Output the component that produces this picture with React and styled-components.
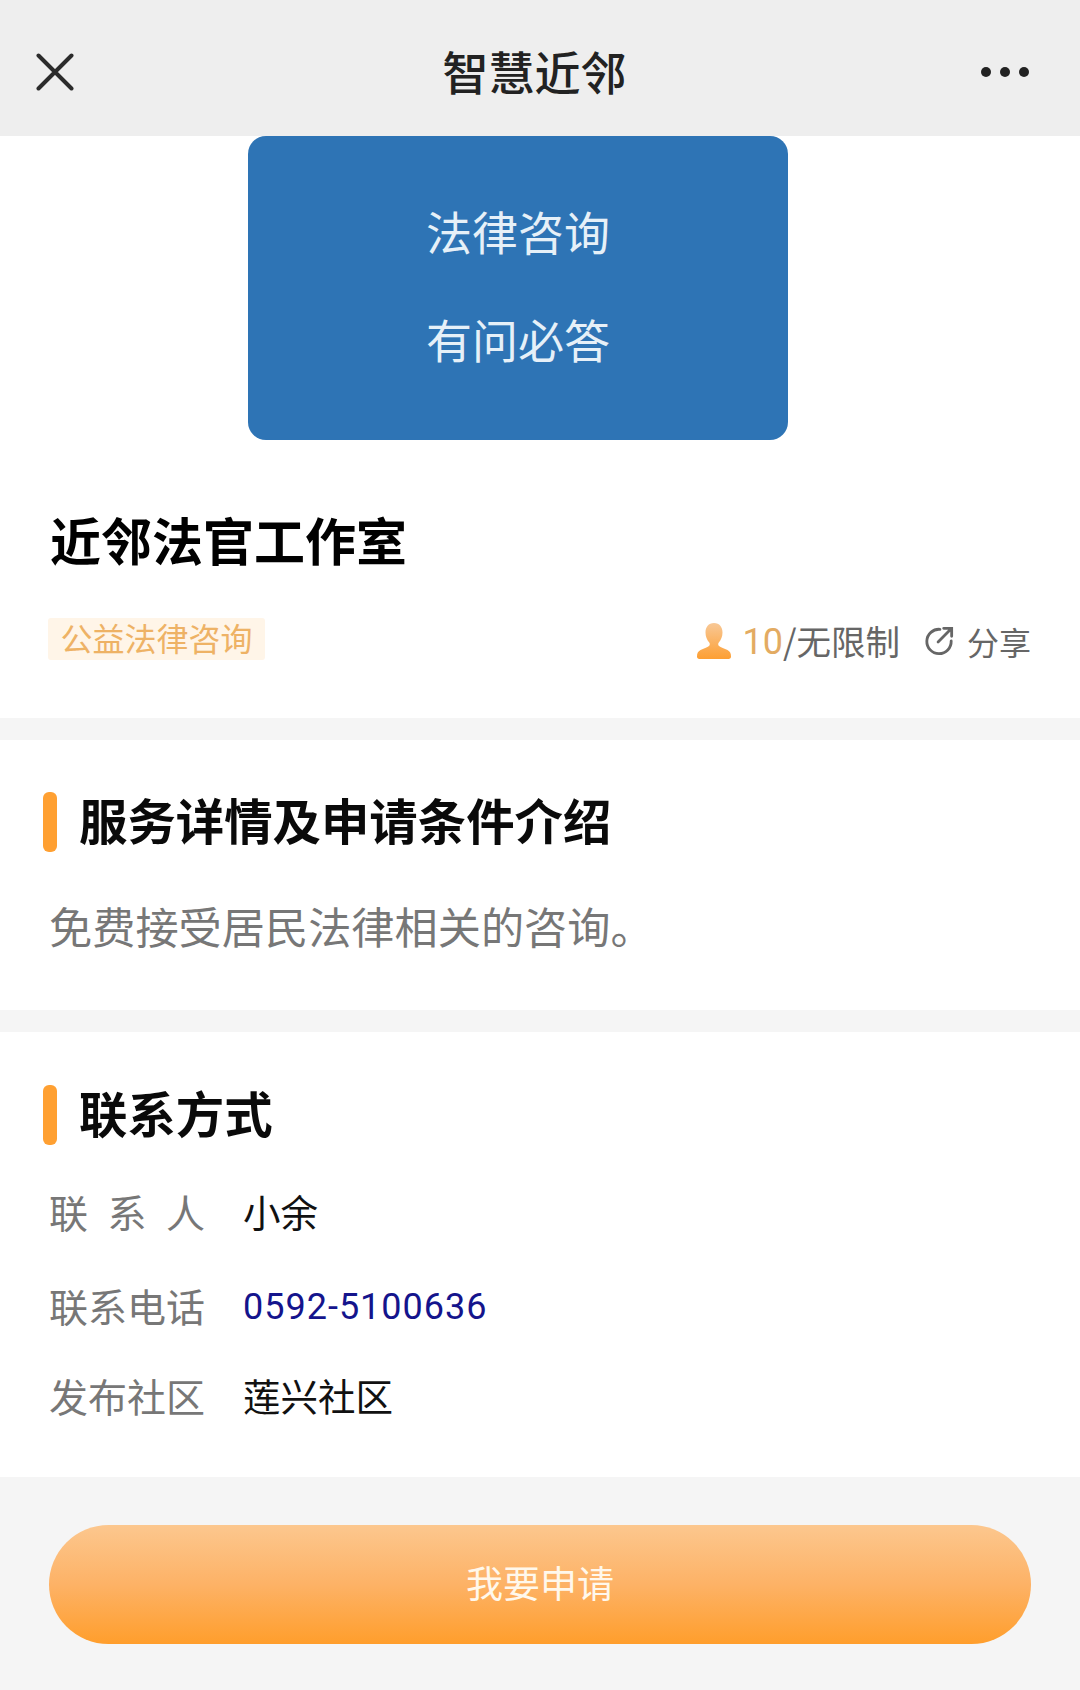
import React from "react";
import styled, { createGlobalStyle } from "styled-components";

const GlobalStyle = createGlobalStyle`
  html, body {
    margin: 0;
    padding: 0;
    background: #f5f5f5;
  }
  body {
    font-family: "Noto Sans CJK SC", "Noto Sans", sans-serif;
  }
`;

const Page = styled.div`
  width: 1080px;
  height: 1690px;
  overflow: hidden;
  display: flex;
  flex-direction: column;
  background: #f5f5f5;
`;

const NavBar = styled.header`
  height: 136px;
  flex: none;
  box-sizing: border-box;
  display: grid;
  grid-template-columns: 1fr auto 1fr;
  align-items: center;
  padding: 8px 51px 0 36px;
  background: #eeeeee;
`;

const NavTitle = styled.h1`
  margin: 0 0 4px 4px;
  font-size: 46px;
  line-height: 60px;
  font-weight: 500;
  color: #222;
  text-align: center;
`;

const NavIcon = styled.svg`
  display: block;
  justify-self: ${({ $end }) => ($end ? "end" : "start")};
`;

const Panel = styled.section`
  background: #fff;
  flex: none;
  height: ${({ $height }) => $height}px;
  margin-bottom: ${({ $gap }) => $gap || 0}px;
  box-sizing: border-box;
  padding-top: ${({ $top }) => $top || 0}px;
`;

const Banner = styled.div`
  width: 540px;
  height: 304px;
  margin-left: 248px;
  box-sizing: border-box;
  padding-top: 40px;
  border-radius: 18px;
  background: #2e74b5;
  color: #e6f0f8;
  text-align: center;
  font-size: 46px;
  line-height: 108px;
  font-weight: 400;
`;

const ActivityTitle = styled.h2`
  margin: 64px 0 0 50px;
  font-size: 51px;
  line-height: 70px;
  font-weight: 700;
  color: #000;
`;

const MetaRow = styled.div`
  display: flex;
  align-items: center;
  justify-content: space-between;
  margin: 40px 49px 0 48px;
`;

const Tag = styled.span`
  display: block;
  width: 217px;
  height: 42px;
  box-sizing: border-box;
  padding-bottom: 4px;
  border-radius: 3px;
  background: #fff5e8;
  color: #eeb265;
  font-size: 32px;
  line-height: 38px;
  text-align: center;
`;

const Stats = styled.div`
  display: flex;
  align-items: center;
  margin-top: 4px;
  font-size: 32px;
  line-height: 44px;
  color: #666;
`;

const Count = styled.span`
  margin-left: 11px;
  margin-top: 2px;
  color: #e3ab62;
  font-family: "Roboto", sans-serif;
  font-size: 36px;
`;

const Quota = styled.span`
  margin-bottom: 2px;
  font-size: 34.5px;
`;

const ShareIcon = styled.svg`
  display: block;
  margin: 0 13px 0 24px;
`;

const HeadingRow = styled.div`
  display: flex;
  align-items: center;
  gap: 22px;
  margin-left: 43px;
`;

const Accent = styled.span`
  display: block;
  width: 14px;
  height: 60px;
  border-radius: 6px;
  background: #ffa032;
`;

const Heading = styled.h3`
  margin: 0;
  padding-bottom: 6px;
  font-size: 48.4px;
  line-height: 54px;
  font-weight: 700;
  color: #0a0a0a;
`;

const Description = styled.p`
  margin: 43px 0 0 49px;
  font-size: 43.2px;
  line-height: 60px;
  color: #777;
`;

const ContactList = styled.div`
  display: flex;
  flex-direction: column;
  gap: 32px;
  margin: 36px 0 0 49px;
`;

const ContactRow = styled.div`
  display: grid;
  grid-template-columns: 194px 1fr;
  align-items: center;
  height: 60px;
`;

const Label = styled.span`
  display: flex;
  justify-content: space-between;
  width: 156px;
  font-size: 39px;
  line-height: 60px;
  color: #777;
`;

const Value = styled.span`
  margin-top: ${({ $link }) => ($link ? "4px" : "0")};
  font-size: ${({ $link }) => ($link ? "36px" : "37.5px")};
  line-height: 60px;
  color: ${({ $link }) => ($link ? "#14148c" : "#111")};
  font-family: ${({ $link }) => ($link ? '"Roboto", sans-serif' : "inherit")};
  letter-spacing: ${({ $link }) => ($link ? "1px" : "0")};
`;

const ApplyButton = styled.button`
  display: block;
  width: 982px;
  height: 119px;
  margin: 48px 0 0 49px;
  padding: 0 0 6px;
  border: 0;
  border-radius: 60px;
  background: linear-gradient(180deg, #fcc78e 0%, #fdb266 50%, #ff9e2c 100%);
  color: #fff8ec;
  font-family: inherit;
  font-size: 37px;
  text-align: center;
`;

function CloseIcon() {
  return (
    <NavIcon width="38" height="38" viewBox="0 0 38 38" fill="none" stroke="#2b2b2b" strokeWidth="4" strokeLinecap="round">
      <path d="M2.500 2.500 L35.500 35.500 M35.500 2.500 L2.500 35.500" />
    </NavIcon>
  );
}

function MoreIcon() {
  return (
    <NavIcon $end width="48" height="12" viewBox="0 0 48 12" fill="#222">
      <circle cx="5" cy="6" r="5" />
      <circle cx="24" cy="6" r="5" />
      <circle cx="43" cy="6" r="5" />
    </NavIcon>
  );
}

function PersonIcon() {
  return (
    <svg width="34" height="36" viewBox="0 0 34 36" style={{ display: "block" }}>
      <defs>
        <linearGradient id="person" x1="0" y1="0" x2="0" y2="1">
          <stop offset="0" stopColor="#f8c896" />
          <stop offset="1" stopColor="#fd9f33" />
        </linearGradient>
      </defs>
      <path
        fill="url(#person)"
        d="M17 0c5.500 0 8.500 4.200 8.500 9.500 0 4-1.500 7.500-3.700 10-.8 1-.8 2.600.2 3.400 1.700 1.300 5.500 2.600 8.500 4.200 2.500 1.300 3.500 3.500 3.500 6.400 0 1.500-.8 2.500-2.500 2.500H2.500C.8 36 0 35 0 33.500c0-2.900 1-5.100 3.500-6.400 3-1.600 6.800-2.900 8.500-4.200 1-.8 1-2.400.2-3.400-2.200-2.500-3.700-6-3.700-10C8.500 4.200 11.500 0 17 0z"
      />
    </svg>
  );
}

export default function App() {
  return (
    <Page>
      <GlobalStyle />
      <NavBar>
        <CloseIcon />
        <NavTitle>智慧近邻</NavTitle>
        <MoreIcon />
      </NavBar>

      <Panel $height={582} $gap={22}>
        <Banner>
          法律咨询
          <br />
          有问必答
        </Banner>
        <ActivityTitle>近邻法官工作室</ActivityTitle>
        <MetaRow>
          <Tag>公益法律咨询</Tag>
          <Stats>
            <PersonIcon />
            <Count>10</Count>
            <Quota>/无限制</Quota>
            <ShareIcon width="30" height="30" viewBox="0 0 32 32" fill="none" stroke="#666" strokeWidth="3" strokeLinecap="round">
              <path d="M17 3.500A13 13 0 1 0 29 16" />
              <path d="M15 17 L29 3 M21 2.500h8.500V11" />
            </ShareIcon>
            分享
          </Stats>
        </MetaRow>
      </Panel>

      <Panel $height={270} $gap={22} $top={52}>
        <HeadingRow>
          <Accent />
          <Heading>服务详情及申请条件介绍</Heading>
        </HeadingRow>
        <Description>免费接受居民法律相关的咨询。</Description>
      </Panel>

      <Panel $height={445} $top={53}>
        <HeadingRow>
          <Accent />
          <Heading>联系方式</Heading>
        </HeadingRow>
        <ContactList>
          <ContactRow>
            <Label>
              <span>联</span>
              <span>系</span>
              <span>人</span>
            </Label>
            <Value>小余</Value>
          </ContactRow>
          <ContactRow>
            <Label>联系电话</Label>
            <Value $link>0592-5100636</Value>
          </ContactRow>
          <ContactRow>
            <Label>发布社区</Label>
            <Value>莲兴社区</Value>
          </ContactRow>
        </ContactList>
      </Panel>

      <ApplyButton>我要申请</ApplyButton>
    </Page>
  );
}
